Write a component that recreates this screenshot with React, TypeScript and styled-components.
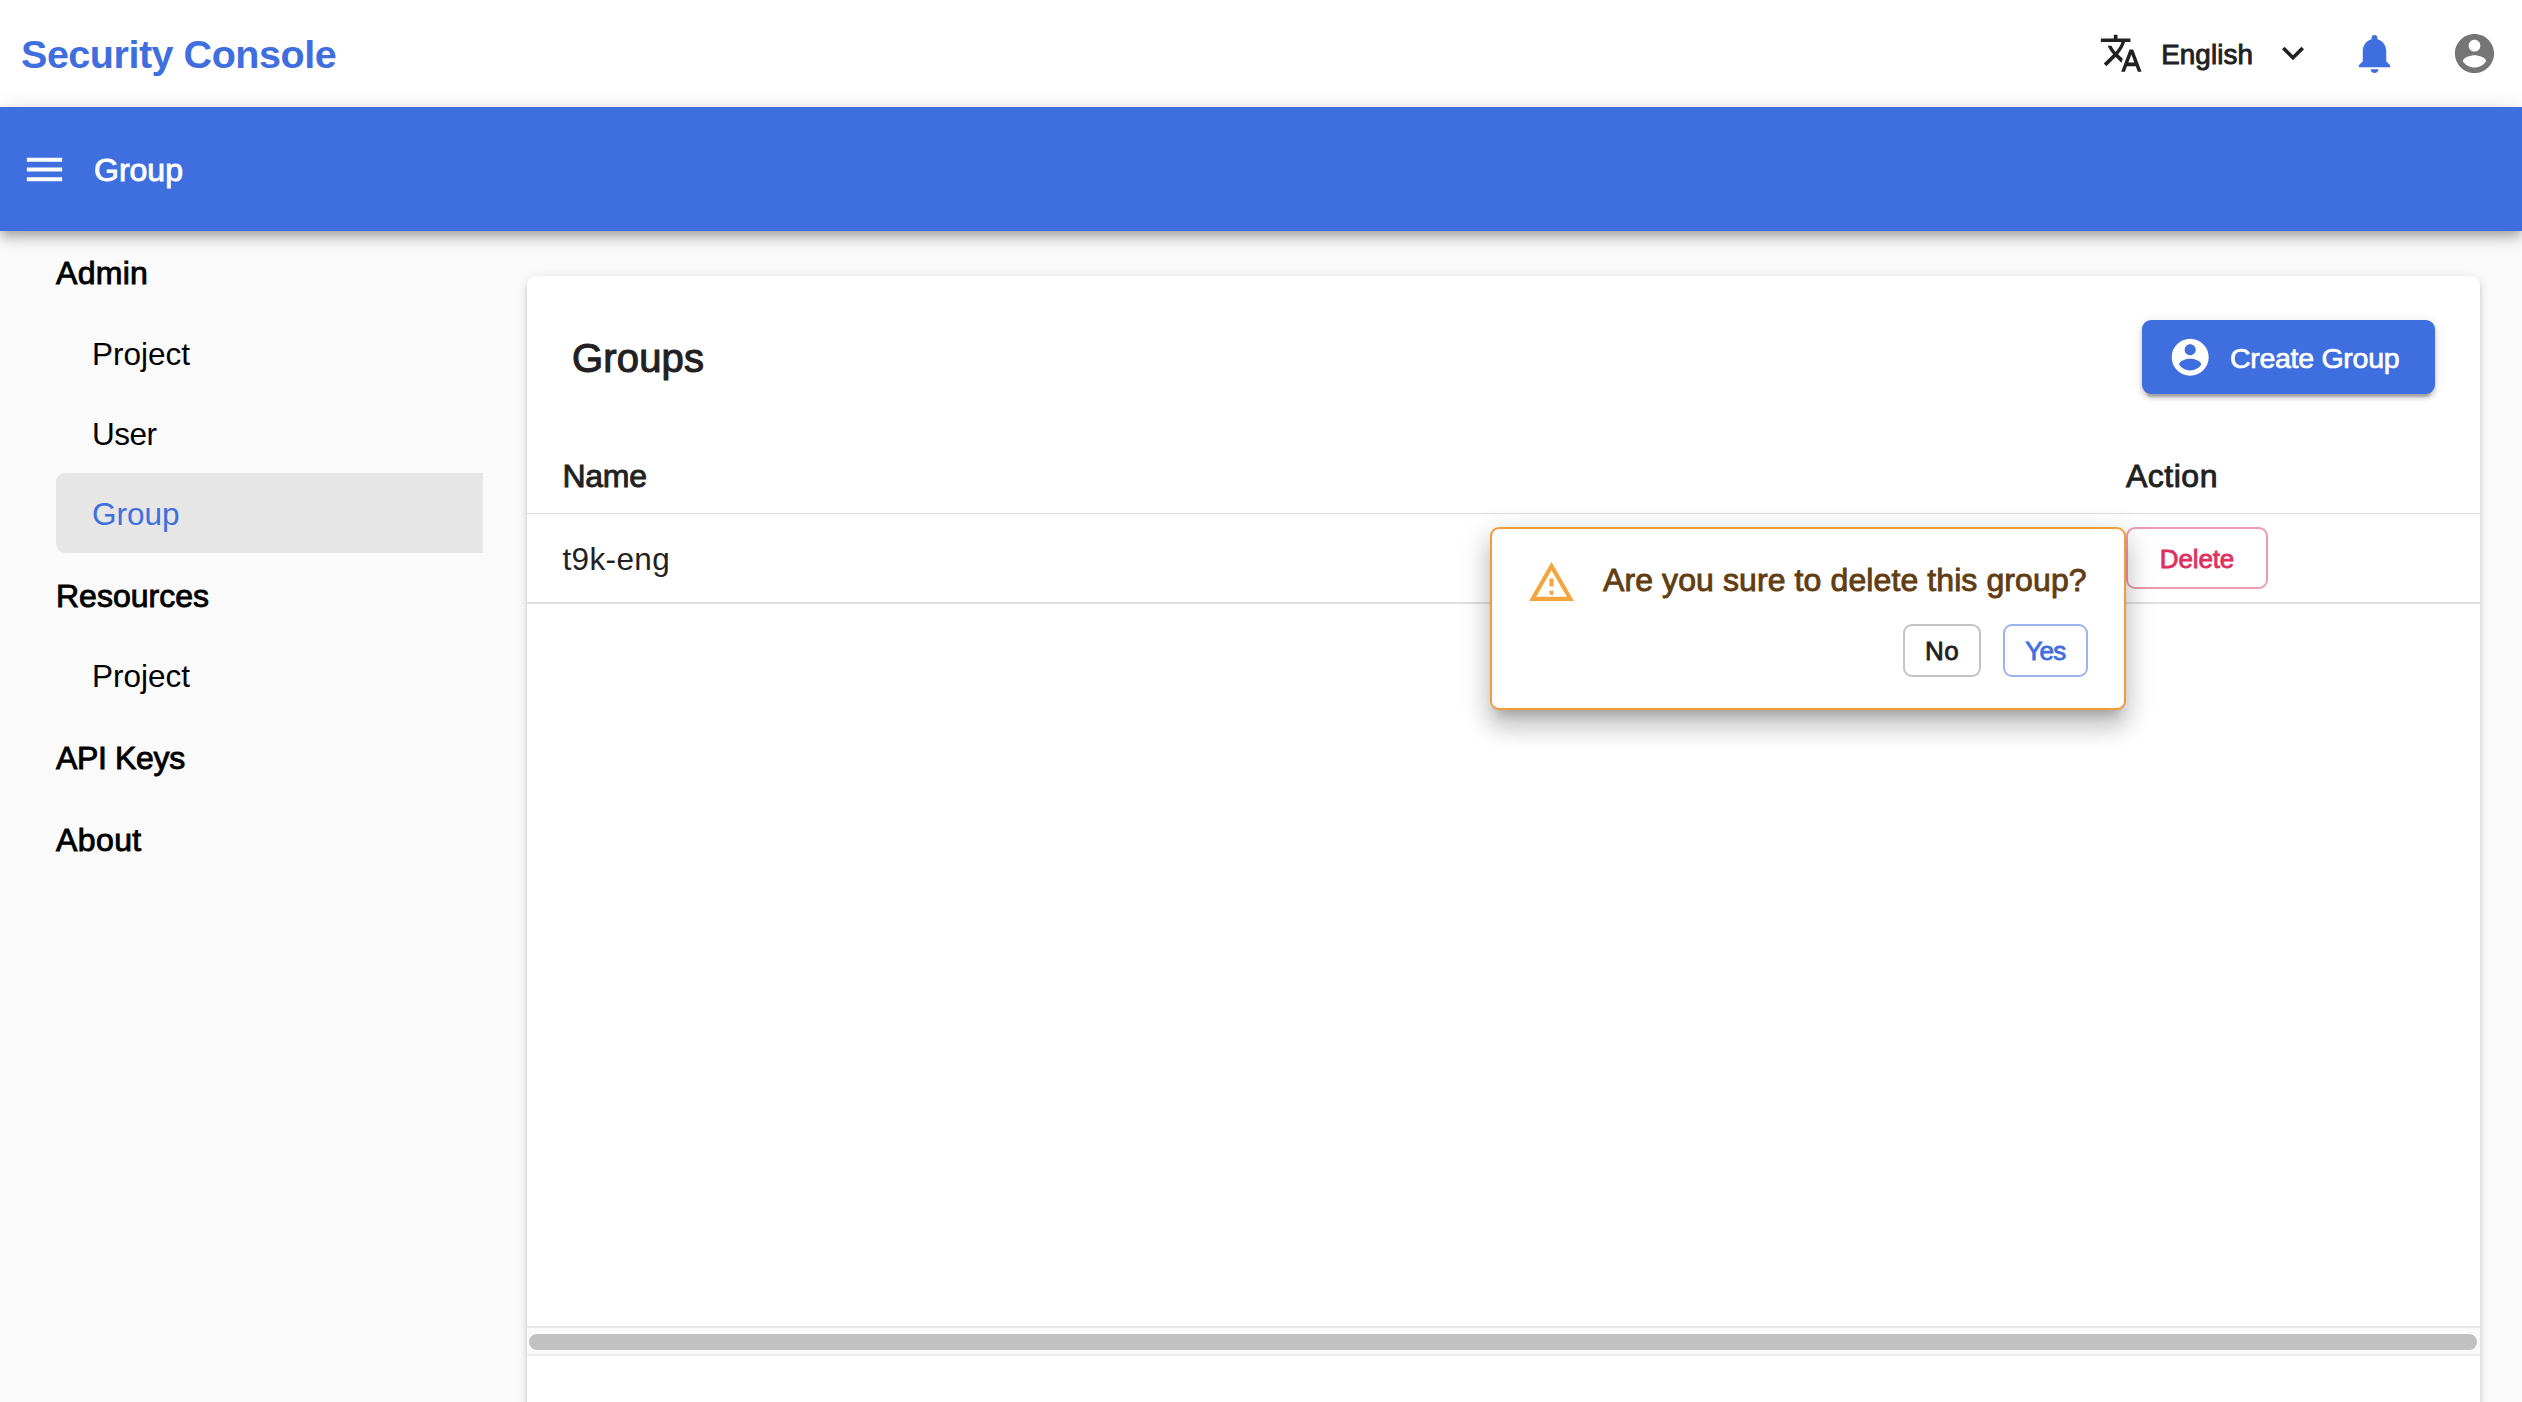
import React from 'react';
import styled, { createGlobalStyle, css } from 'styled-components';

const blue = '#3f6ede';
const ink = '#212121';

const GlobalStyle = createGlobalStyle`
  *, *::before, *::after { box-sizing: border-box; }
  body {
    margin: 0;
    background: #fafafa;
    font-family: "Liberation Sans", Arial, sans-serif;
    color: ${ink};
  }
  button { font-family: inherit; cursor: pointer; background: none; }
`;

/* Text of medium weight: the regular face, slightly thickened. */
const medium = css`
  font-weight: 400;
  -webkit-text-stroke: 0.9px currentColor;
`;

const Page = styled.div`
  display: flex;
  flex-direction: column;
  height: 1402px;
  overflow: hidden;
`;

const Glyph = styled.svg<{ $size: number }>`
  display: block;
  flex: none;
  width: ${(p) => p.$size}px;
  height: ${(p) => p.$size}px;
  fill: currentColor;
`;

const paths = {
  translate:
    'M12.87 15.07l-2.54-2.51.03-.03c1.74-1.94 2.98-4.17 3.71-6.53H17V4h-7V2H8v2H1v1.99h11.17C11.5 7.92 10.44 9.75 9 11.35 8.07 10.32 7.3 9.19 6.69 8h-2c.73 1.63 1.73 3.17 2.98 4.56l-5.09 5.02L4 19l5-5 3.11 3.11.76-2.04zM18.5 10h-2L12 22h2l1.12-3h4.75L21 22h2l-4.5-12zm-2.62 7l1.62-4.33L19.12 17h-3.24z',
  expand: 'M16.59 8.59L12 13.17 7.41 8.59 6 10l6 6 6-6z',
  bell: 'M12 22c1.1 0 2-.9 2-2h-4c0 1.1.89 2 2 2zm6-6v-5c0-3.07-1.64-5.64-4.5-6.32V4c0-.83-.67-1.5-1.5-1.5s-1.5.67-1.5 1.5v.68C7.63 5.36 6 7.92 6 11v5l-2 2v1h16v-1l-2-2z',
  account:
    'M12 2C6.48 2 2 6.48 2 12s4.48 10 10 10 10-4.48 10-10S17.52 2 12 2zm0 3c1.66 0 3 1.34 3 3s-1.34 3-3 3-3-1.34-3-3 1.34-3 3-3zm0 14.2c-2.5 0-4.71-1.28-6-3.22.03-1.99 4-3.08 6-3.08 1.99 0 5.97 1.09 6 3.08-1.29 1.94-3.5 3.22-6 3.22z',
  menu: 'M3 18h18v-2H3v2zm0-5h18v-2H3v2zm0-7v2h18V6H3z',
  warning:
    'M12 5.99L19.53 19H4.47L12 5.99M12 2L1 21h22L12 2zm1 14h-2v2h2v-2zm0-6h-2v4h2v-4z',
};

function Icon({ name, size }: { name: keyof typeof paths; size: number }) {
  return (
    <Glyph $size={size} viewBox="0 0 24 24" aria-hidden="true">
      <path d={paths[name]} />
    </Glyph>
  );
}

const Header = styled.header`
  flex: none;
  display: flex;
  align-items: center;
  justify-content: space-between;
  height: 107px;
  padding: 0 24px 1px 21px;
  background: #fff;
`;

const Brand = styled.h1`
  margin: 2px 0 0;
  font-size: 39.5px;
  line-height: 44px;
  font-weight: 700;
  letter-spacing: -0.47px;
  color: ${blue};
`;

const HeaderTools = styled.div`
  display: flex;
  align-items: center;
`;

const LanguagePicker = styled.div`
  display: flex;
  align-items: center;
  margin-right: 36px;
`;

const LanguageName = styled.span`
  ${medium}
  margin: 3px 18px 0 17.5px;
  font-size: 27.8px;
  line-height: 41px;
  letter-spacing: 0.1px;
`;

const Notifications = styled.div`
  color: ${blue};
  margin-right: 53px;
`;

const Profile = styled.div`
  color: #757575;
`;

const TitleBar = styled.div`
  position: relative;
  flex: none;
  display: flex;
  align-items: center;
  height: 124px;
  padding-left: 21px;
  gap: 26px;
  background: ${blue};
  color: #fff;
  box-shadow: 0 4px 9px -2px rgba(0, 0, 0, 0.2), 0 9px 11px 0 rgba(0, 0, 0, 0.14),
    0 2px 22px 0 rgba(0, 0, 0, 0.12);
`;

const TitleText = styled.h2`
  ${medium}
  margin: 2px 0 0;
  font-size: 32px;
  line-height: 40px;
`;

const Body = styled.div`
  display: flex;
  flex: 1;
  min-height: 0;
`;

const Sidebar = styled.nav`
  flex: none;
  width: 483px;
  padding-left: 56px;
`;

const SectionLink = styled.div<{ $track?: number }>`
  ${medium}
  display: flex;
  align-items: center;
  height: 82px;
  padding-top: 4px;
  font-size: 32px;
  line-height: 40px;
  letter-spacing: ${(p) => p.$track ?? 0}px;
  color: #000;
  &:first-child { padding-top: 2px; }
`;

const PageLink = styled.div<{ $active?: boolean; $track?: number }>`
  display: flex;
  align-items: center;
  height: 80px;
  padding: 2px 0 0 36px;
  border-radius: 9px 0 0 9px;
  font-size: 31.5px;
  line-height: 40px;
  letter-spacing: ${(p) => p.$track ?? 0}px;
  color: ${(p) => (p.$active ? blue : '#000')};
  background: ${(p) => (p.$active ? '#e6e6e6' : 'transparent')};
`;

const Card = styled.main`
  flex: 1;
  margin: 45px 42px 0 44px;
  height: 1200px;
  background: #fff;
  border-radius: 9px;
  box-shadow: 0 7px 2px -4px rgba(0, 0, 0, 0.2), 0 4px 4px 0 rgba(0, 0, 0, 0.14),
    0 2px 11px 0 rgba(0, 0, 0, 0.12);
`;

const CardHeader = styled.div`
  display: flex;
  align-items: center;
  justify-content: space-between;
  padding: 44px 45px 44px 45px;
`;

const CardTitle = styled.h3`
  ${medium}
  -webkit-text-stroke-width: 1.1px;
  margin: 2px 0 0;
  font-size: 40px;
  line-height: 44px;
  letter-spacing: 0.15px;
`;

const CreateButton = styled.button`
  display: flex;
  align-items: center;
  gap: 17.5px;
  width: 293px;
  height: 74px;
  padding: 0 0 0 26px;
  border: 0;
  border-radius: 9px;
  background: ${blue};
  color: #fff;
  box-shadow: 0 7px 2px -4px rgba(0, 0, 0, 0.2), 0 4px 4px 0 rgba(0, 0, 0, 0.14),
    0 2px 11px 0 rgba(0, 0, 0, 0.12);
`;

const CreateLabel = styled.span`
  ${medium}
  -webkit-text-stroke-width: 0.7px;
  margin-top: 2px;
  font-size: 28.5px;
  line-height: 40px;
  letter-spacing: -0.27px;
  white-space: nowrap;
`;

const row = css`
  display: grid;
  grid-template-columns: 1599px 1fr;
  align-items: center;
`;

const TableHead = styled.div`
  ${row}
  height: 76px;
  padding-top: 1px;
  border-bottom: 1px solid #dcdddd;
`;

const HeadCell = styled.div<{ $inset?: number; $track?: number }>`
  ${medium}
  padding-left: ${(p) => p.$inset ?? 0}px;
  font-size: 32px;
  line-height: 40px;
  letter-spacing: ${(p) => p.$track ?? 0}px;
`;

const TableRow = styled.div`
  ${row}
  height: 90px;
  border-bottom: 2px solid #e0e0e0;
`;

const NameCell = styled.div`
  padding: 2px 0 0 35.5px;
  font-size: 31.5px;
  line-height: 40px;
  letter-spacing: 0.35px;
`;

const ActionCell = styled.div`
  position: relative;
  display: flex;
`;

const tones = {
  danger: { text: '#e0305d', border: '#ef9ab0' },
  neutral: { text: '#212121', border: '#c4c4c4' },
  primary: { text: blue, border: '#9bb4ef' },
};

const OutlinedButton = styled.button<{
  $tone: keyof typeof tones;
  $width: number;
  $height: number;
  $track: number;
}>`
  ${medium}
  -webkit-text-stroke-width: 0.8px;
  display: flex;
  align-items: center;
  justify-content: center;
  width: ${(p) => p.$width}px;
  height: ${(p) => p.$height}px;
  padding: ${(p) => (p.$height > 60 ? 2 : 1)}px 0 0;
  border: 2px solid ${(p) => tones[p.$tone].border};
  border-radius: 9px;
  font-size: 26px;
  line-height: 40px;
  letter-spacing: ${(p) => p.$track}px;
  color: ${(p) => tones[p.$tone].text};
`;

const ConfirmPopup = styled.div`
  position: absolute;
  top: 0;
  right: 100%;
  width: 636px;
  height: 183px;
  padding: 31px 36px 31px 35px;
  border: 2px solid #f09d37;
  border-radius: 9px;
  background: #fff;
  box-shadow: 0 11px 11px -7px rgba(0, 0, 0, 0.2), 0 18px 22px 2px rgba(0, 0, 0, 0.14),
    0 7px 31px 4px rgba(0, 0, 0, 0.12);
`;

const ConfirmMessage = styled.div`
  ${medium}
  display: flex;
  gap: 27px;
  height: 40px;
  font-size: 32px;
  line-height: 40px;
  letter-spacing: 0.1px;
  white-space: nowrap;
  color: #613d12;
`;

const WarningMark = styled.span`
  margin-top: -2px;
  color: #f4a540;
`;

const ConfirmActions = styled.div`
  display: flex;
  justify-content: flex-end;
  gap: 22px;
  margin-top: 24px;
`;

const TableSpace = styled.div`
  height: 722px;
`;

const ScrollTrack = styled.div`
  height: 30px;
  padding: 6px 3px 4px 2px;
  border-top: 2px solid #e7e7e7;
  border-bottom: 2px solid #ededed;
  background: #fafafa;
`;

const ScrollThumb = styled.div`
  height: 16px;
  border-radius: 8px;
  background: #c1c1c1;
`;

export default function App() {
  return (
    <Page>
      <GlobalStyle />
      <Header>
        <Brand>Security Console</Brand>
        <HeaderTools>
          <LanguagePicker>
            <Icon name="translate" size={44.4} />
            <LanguageName>English</LanguageName>
            <Icon name="expand" size={44} />
          </LanguagePicker>
          <Notifications>
            <Icon name="bell" size={47} />
          </Notifications>
          <Profile>
            <Icon name="account" size={47} />
          </Profile>
        </HeaderTools>
      </Header>
      <TitleBar>
        <Icon name="menu" size={47} />
        <TitleText>Group</TitleText>
      </TitleBar>
      <Body>
        <Sidebar>
          <SectionLink $track={0.3}>Admin</SectionLink>
          <PageLink>Project</PageLink>
          <PageLink $track={-0.5}>User</PageLink>
          <PageLink $active>Group</PageLink>
          <SectionLink>Resources</SectionLink>
          <PageLink>Project</PageLink>
          <SectionLink $track={-0.35}>API Keys</SectionLink>
          <SectionLink $track={0.4}>About</SectionLink>
        </Sidebar>
        <Card>
          <CardHeader>
            <CardTitle>Groups</CardTitle>
            <CreateButton>
              <Icon name="account" size={44.4} />
              <CreateLabel>Create Group</CreateLabel>
            </CreateButton>
          </CardHeader>
          <TableHead>
            <HeadCell $inset={35.5} $track={-0.3}>Name</HeadCell>
            <HeadCell $track={0.5}>Action</HeadCell>
          </TableHead>
          <TableRow>
            <NameCell>t9k-eng</NameCell>
            <ActionCell>
              <OutlinedButton $tone="danger" $width={142} $height={62} $track={-0.15}>
                Delete
              </OutlinedButton>
              <ConfirmPopup role="dialog">
                <ConfirmMessage>
                  <WarningMark>
                    <Icon name="warning" size={49} />
                  </WarningMark>
                  <span>Are you sure to delete this group?</span>
                </ConfirmMessage>
                <ConfirmActions>
                  <OutlinedButton $tone="neutral" $width={78} $height={53} $track={0.5}>
                    No
                  </OutlinedButton>
                  <OutlinedButton $tone="primary" $width={85} $height={53} $track={-0.7}>
                    Yes
                  </OutlinedButton>
                </ConfirmActions>
              </ConfirmPopup>
            </ActionCell>
          </TableRow>
          <TableSpace />
          <ScrollTrack>
            <ScrollThumb />
          </ScrollTrack>
        </Card>
      </Body>
    </Page>
  );
}
